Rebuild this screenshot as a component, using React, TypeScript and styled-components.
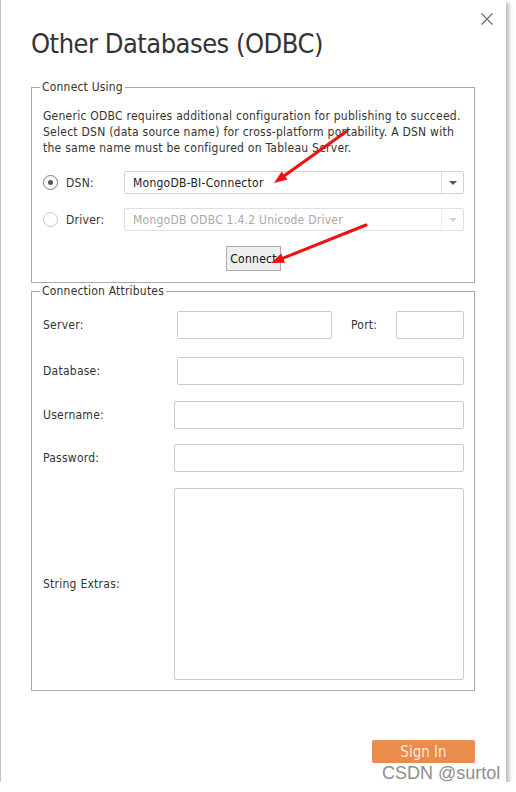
import styled, { createGlobalStyle } from 'styled-components'

const GlobalStyle = createGlobalStyle`
  html, body {
    margin: 0;
    background: #ffffff;
  }
  body {
    font-family: "DejaVu Sans Condensed", "DejaVu Sans", sans-serif;
    color: #333333;
  }
`

const Dialog = styled.div`
  position: relative;
  box-sizing: border-box;
  width: 506px;
  height: 782px;
  padding: 26px 31px 19px 30px;
  display: flex;
  flex-direction: column;
  background: #ffffff;
  border-left: 1px solid #c6c6c6;
  box-shadow: 3px 3px 4px rgba(0, 0, 0, 0.28);
`

const CloseButton = styled.button`
  position: absolute;
  top: 12px;
  right: 12px;
  width: 14px;
  height: 14px;
  padding: 0;
  border: 0;
  background: none;
  display: flex;
`

const Title = styled.h1`
  margin: 0 0 18px;
  font-size: 27px;
  font-weight: 400;
  line-height: 36px;
  letter-spacing: -0.5px;
  color: #333333;
`

const Group = styled.fieldset`
  margin: 0;
  padding: 0 10px 11px 11px;
  border: 1px solid #a8a8a8;
  min-width: 0;
  & + & {
    margin-top: 1px;
    padding-bottom: 10px;
  }
`

const Legend = styled.legend`
  margin-left: -3px;
  padding: 0 2px;
  font-size: 12px;
  line-height: 14px;
  letter-spacing: 0.2px;
  color: #333333;
`

const Note = styled.p`
  margin: 14px 0 15px;
  font-size: 12px;
  line-height: 16px;
  letter-spacing: 0.25px;
  white-space: nowrap;
`

const ChoiceList = styled.div`
  display: grid;
  row-gap: 14px;
`

const ChoiceRow = styled.div`
  display: grid;
  grid-template-columns: 81px 1fr;
  align-items: center;
`

const RadioLabel = styled.label`
  display: flex;
  align-items: center;
  gap: 8px;
  font-size: 12px;
  letter-spacing: 0.25px;
  color: #333333;
`

const RadioMark = styled.span<{ $checked?: boolean }>`
  box-sizing: border-box;
  width: 15px;
  height: 15px;
  border-radius: 50%;
  border: 1px solid ${({ $checked }) => ($checked ? '#7a7a7a' : '#c9c9c9')};
  display: flex;
  align-items: center;
  justify-content: center;
  background: #ffffff;

  &::after {
    content: '';
    width: 5px;
    height: 5px;
    border-radius: 50%;
    background: ${({ $checked }) => ($checked ? '#555555' : 'transparent')};
  }
`

const Select = styled.div<{ $disabled?: boolean }>`
  box-sizing: border-box;
  height: 23px;
  display: flex;
  align-items: stretch;
  border: 1px solid ${({ $disabled }) => ($disabled ? '#e0e0e0' : '#d2d2d2')};
  border-radius: 2px;
  background: #ffffff;
  font-size: 12px;
  letter-spacing: 0.25px;
  color: ${({ $disabled }) => ($disabled ? '#a8a8a8' : '#222222')};
`

const SelectValue = styled.span`
  flex: 1;
  display: flex;
  align-items: center;
  padding-left: 8px;
`

const SelectArrow = styled.span<{ $disabled?: boolean }>`
  width: 21px;
  display: flex;
  align-items: center;
  justify-content: center;
  border-left: 1px solid ${({ $disabled }) => ($disabled ? '#ececec' : '#e0e0e0')};

  &::after {
    content: '';
    border-left: 4px solid transparent;
    border-right: 4px solid transparent;
    border-top: 4px solid ${({ $disabled }) => ($disabled ? '#d2d2d2' : '#555555')};
  }
`

const ButtonRow = styled.div`
  display: flex;
  justify-content: center;
  margin-top: 15px;
`

const ConnectButton = styled.button`
  box-sizing: border-box;
  height: 25px;
  padding: 0 3px;
  border: 1px solid #adadad;
  background: #eeeeee;
  font-family: inherit;
  font-size: 12px;
  letter-spacing: 0.25px;
  color: #111111;
`

const FieldList = styled.div`
  display: flex;
  flex-direction: column;
  padding-top: 13px;
`

const FieldRow = styled.div<{ $labelWidth: number; $space: number }>`
  display: grid;
  grid-template-columns: ${({ $labelWidth }) => $labelWidth}px 1fr;
  align-items: center;
  margin-top: ${({ $space }) => $space}px;
`

const FieldLabel = styled.label`
  font-size: 12px;
  letter-spacing: 0.25px;
  color: #333333;
`

const InlineFields = styled.div`
  display: flex;
  align-items: center;
`

const TextInput = styled.input<{ $width?: number }>`
  box-sizing: border-box;
  height: 28px;
  width: ${({ $width }) => ($width ? `${$width}px` : '100%')};
  margin: 0;
  border: 1px solid #cbcbcb;
  border-radius: 2px;
  background: #ffffff;
  font-family: inherit;
`

const PortLabel = styled.label`
  margin: 0 auto 0 19px;
  font-size: 12px;
  letter-spacing: 0.25px;
  color: #333333;
`

const TextArea = styled.textarea`
  box-sizing: border-box;
  width: 100%;
  height: 192px;
  margin: 0;
  border: 1px solid #cbcbcb;
  border-radius: 2px;
  resize: none;
  display: block;
`

const Footer = styled.div`
  margin-top: auto;
  display: flex;
  justify-content: flex-end;
`

const SignInButton = styled.button`
  box-sizing: border-box;
  width: 103px;
  height: 23px;
  border: 0;
  border-radius: 2px;
  background: #e98c4e;
  font-family: inherit;
  font-size: 15px;
  color: #fde8da;
`

const Annotations = styled.svg`
  position: absolute;
  left: 0;
  top: 0;
  width: 506px;
  height: 782px;
  pointer-events: none;
`

const Watermark = styled.span`
  position: absolute;
  left: 382px;
  top: 762px;
  font-family: "Liberation Sans", Arial, sans-serif;
  font-size: 18px;
  line-height: 22px;
  color: #8e8e8e;
`

type Arrow = { from: [number, number]; to: [number, number] }

const arrows: Arrow[] = [
  { from: [346, 131], to: [273, 183] },
  { from: [365, 225], to: [270, 263] },
]

function ArrowMark({ from, to }: Arrow) {
  const [x1, y1] = from
  const [x2, y2] = to
  const len = Math.hypot(x2 - x1, y2 - y1)
  const ux = (x2 - x1) / len
  const uy = (y2 - y1) / len
  const head = 13
  const half = 5
  const bx = x2 - ux * head
  const by = y2 - uy * head
  const points = [
    `${x2},${y2}`,
    `${bx - uy * half},${by + ux * half}`,
    `${bx + uy * half},${by - ux * half}`,
  ].join(' ')
  return (
    <g>
      <line x1={x1} y1={y1} x2={bx} y2={by} stroke="#f01010" strokeWidth={3} strokeLinecap="round" />
      <polygon points={points} fill="#f01010" />
    </g>
  )
}

export default function App() {
  return (
    <>
      <GlobalStyle />
      <Dialog>
        <CloseButton aria-label="Close">
          <svg width="14" height="14" viewBox="0 0 14 14">
            <path d="M1.5 1.5 L12.5 12.5 M12.5 1.5 L1.5 12.5" stroke="#6e6e6e" strokeWidth="1.2" />
          </svg>
        </CloseButton>

        <Title>Other Databases (ODBC)</Title>

        <Group>
          <Legend>Connect Using</Legend>
          <Note>
            Generic ODBC requires additional configuration for publishing to succeed.
            <br />
            Select DSN (data source name) for cross-platform portability. A DSN with
            <br />
            the same name must be configured on Tableau Server.
          </Note>

          <ChoiceList>
            <ChoiceRow>
              <RadioLabel>
                <RadioMark $checked />
                DSN:
              </RadioLabel>
              <Select>
                <SelectValue>MongoDB-BI-Connector</SelectValue>
                <SelectArrow />
              </Select>
            </ChoiceRow>
            <ChoiceRow>
              <RadioLabel>
                <RadioMark />
                Driver:
              </RadioLabel>
              <Select $disabled>
                <SelectValue>MongoDB ODBC 1.4.2 Unicode Driver</SelectValue>
                <SelectArrow $disabled />
              </Select>
            </ChoiceRow>
          </ChoiceList>

          <ButtonRow>
            <ConnectButton>Connect</ConnectButton>
          </ButtonRow>
        </Group>

        <Group>
          <Legend>Connection Attributes</Legend>
          <FieldList>
            <FieldRow $labelWidth={134} $space={0}>
              <FieldLabel>Server:</FieldLabel>
              <InlineFields>
                <TextInput $width={155} />
                <PortLabel>Port:</PortLabel>
                <TextInput $width={68} />
              </InlineFields>
            </FieldRow>
            <FieldRow $labelWidth={134} $space={18}>
              <FieldLabel>Database:</FieldLabel>
              <TextInput />
            </FieldRow>
            <FieldRow $labelWidth={131} $space={16}>
              <FieldLabel>Username:</FieldLabel>
              <TextInput />
            </FieldRow>
            <FieldRow $labelWidth={131} $space={15}>
              <FieldLabel>Password:</FieldLabel>
              <TextInput type="password" />
            </FieldRow>
            <FieldRow $labelWidth={131} $space={16}>
              <FieldLabel>String Extras:</FieldLabel>
              <TextArea />
            </FieldRow>
          </FieldList>
        </Group>

        <Footer>
          <SignInButton>Sign In</SignInButton>
        </Footer>

        <Annotations viewBox="0 0 506 782">
          {arrows.map((a, i) => (
            <ArrowMark key={i} {...a} />
          ))}
        </Annotations>
      </Dialog>
      <Watermark>CSDN @surtol</Watermark>
    </>
  )
}
